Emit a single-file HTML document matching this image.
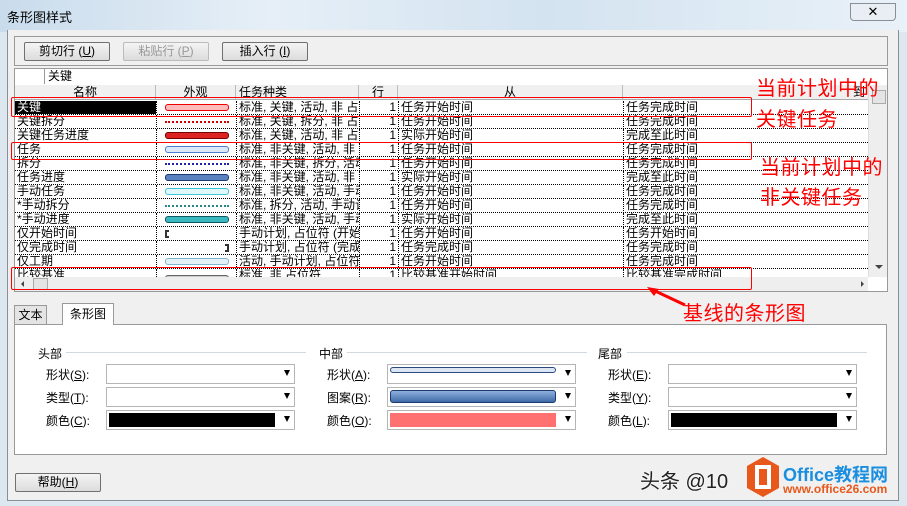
<!DOCTYPE html>
<html><head><meta charset="utf-8"><style>
*{box-sizing:border-box;margin:0;padding:0}
body{width:907px;height:506px;overflow:hidden;background:#dde7f0;font-family:"Liberation Sans","Noto Sans CJK SC",sans-serif;font-size:12px;color:#000;position:relative}
.abs{position:absolute}
.title{left:0;top:0;width:907px;height:32px;background:linear-gradient(90deg,#c9dcec,#e6eff7 30%,#d3e3f0 60%,#e9f1f8);}
.dlg{left:7px;top:30px;width:892px;height:471px;background:#f0f0f0;border:1px solid #8a8f96;border-top:none}
.btn{height:19px;border:1px solid #707070;border-radius:2px;background:linear-gradient(#f4f4f4,#dcdcdc);text-align:center;line-height:17px;font-size:12px}
.row{position:absolute;left:0;height:14px;width:853px;border-bottom:1px dotted #000;font-size:12px;line-height:13px;white-space:nowrap;overflow:hidden}
.c{position:absolute;top:0;height:14px;overflow:hidden}
.bar{position:absolute;left:8px;top:3px;width:64px;height:7px;border-radius:3px}
.red{color:#f00;font-size:20px;position:absolute;white-space:nowrap;letter-spacing:0.5px}
.box{position:absolute;width:189px;height:20px;background:#fff;border:1px solid #b5b5b5}
.box .ar{position:absolute;right:4px;top:5px;width:0;height:0;border-left:3px solid transparent;border-right:3px solid transparent;border-top:6px solid #000}
.lb{position:absolute;font-size:12px}
</style></head><body>
<div class="abs title"></div>
<div class="abs" style="left:7px;top:7px;font-size:13px">条形图样式</div>
<div class="abs" style="left:850px;top:3px;width:46px;height:18px;border:1px solid #8a8f96;border-radius:0 0 4px 4px;background:#e8eef4;text-align:center;font-size:13px;line-height:16px">✕</div>
<div class="abs dlg"></div>
<div class="abs" style="left:14px;top:36px;width:874px;height:30px;border:1px solid #999"></div>
<div class="abs btn" style="left:24px;top:42px;width:86px">剪切行 (<u>U</u>)</div>
<div class="abs btn" style="left:123px;top:42px;width:86px;color:#999;border-color:#bbb">粘贴行 (<u>P</u>)</div>
<div class="abs btn" style="left:222px;top:42px;width:86px">插入行 (<u>I</u>)</div>
<div class="abs" style="left:14px;top:68px;width:874px;height:224px;background:#fff;border:1px solid #999"></div>
<div class="abs" style="left:44px;top:68px;height:16px;border-left:1px solid #999;padding-left:3px;line-height:16px">关键</div>
<div class="abs" style="left:15px;top:85px;width:853px;height:15px;background:#f0f0f0;border-bottom:1px solid #aaa;line-height:14px">
<div class="c" style="left:0;width:141px;text-align:center;border-right:1px solid #bbb">名称</div>
<div class="c" style="left:141px;width:80px;text-align:center;border-right:1px solid #bbb">外观</div>
<div class="c" style="left:221px;width:123px;padding-left:3px;border-right:1px solid #bbb">任务种类</div>
<div class="c" style="left:344px;width:39px;text-align:center;border-right:1px solid #bbb">行</div>
<div class="c" style="left:383px;width:225px;text-align:center;border-right:1px solid #bbb">从</div>
<div class="c" style="left:608px;width:245px;text-align:right;padding-right:3px">到</div>
</div>
<div class="abs" style="left:15px;top:101px;width:853px;height:176px;overflow:hidden">
<div class="row" style="top:0"><div class="c" style="left:0;width:141px;background:#000;color:#fff;padding-left:2px">关键</div><div class="c" style="left:141px;width:80px;border-left:1px dotted #000"><div class="bar" style="background:#fbb;border:1px solid #e00"></div></div><div class="c" style="left:221px;width:123px;border-left:1px dotted #000;padding-left:2px">标准, 关键, 活动, 非 占</div><div class="c" style="left:344px;width:39px;border-left:1px dotted #000;text-align:right;padding-right:2px">1</div><div class="c" style="left:383px;width:225px;border-left:1px dotted #000;padding-left:2px">任务开始时间</div><div class="c" style="left:608px;width:245px;border-left:1px dotted #000;padding-left:2px">任务完成时间</div></div>
<div class="row" style="top:14px"><div class="c" style="left:0;width:141px;padding-left:2px">关键拆分</div><div class="c" style="left:141px;width:80px;border-left:1px dotted #000"><div class="bar" style="top:6px;height:2px;border-top:2px dotted #c00;border-radius:0"></div></div><div class="c" style="left:221px;width:123px;border-left:1px dotted #000;padding-left:2px">标准, 关键, 拆分, 非 占</div><div class="c" style="left:344px;width:39px;border-left:1px dotted #000;text-align:right;padding-right:2px">1</div><div class="c" style="left:383px;width:225px;border-left:1px dotted #000;padding-left:2px">任务开始时间</div><div class="c" style="left:608px;width:245px;border-left:1px dotted #000;padding-left:2px">任务完成时间</div></div>
<div class="row" style="top:28px"><div class="c" style="left:0;width:141px;padding-left:2px">关键任务进度</div><div class="c" style="left:141px;width:80px;border-left:1px dotted #000"><div class="bar" style="background:#d22;border:1px solid #700"></div></div><div class="c" style="left:221px;width:123px;border-left:1px dotted #000;padding-left:2px">标准, 关键, 活动, 非 占</div><div class="c" style="left:344px;width:39px;border-left:1px dotted #000;text-align:right;padding-right:2px">1</div><div class="c" style="left:383px;width:225px;border-left:1px dotted #000;padding-left:2px">实际开始时间</div><div class="c" style="left:608px;width:245px;border-left:1px dotted #000;padding-left:2px">完成至此时间</div></div>
<div class="row" style="top:42px"><div class="c" style="left:0;width:141px;padding-left:2px">任务</div><div class="c" style="left:141px;width:80px;border-left:1px dotted #000"><div class="bar" style="background:#dde8f8;border:1px solid #4a7fd0"></div></div><div class="c" style="left:221px;width:123px;border-left:1px dotted #000;padding-left:2px">标准, 非关键, 活动, 非</div><div class="c" style="left:344px;width:39px;border-left:1px dotted #000;text-align:right;padding-right:2px">1</div><div class="c" style="left:383px;width:225px;border-left:1px dotted #000;padding-left:2px">任务开始时间</div><div class="c" style="left:608px;width:245px;border-left:1px dotted #000;padding-left:2px">任务完成时间</div></div>
<div class="row" style="top:56px"><div class="c" style="left:0;width:141px;padding-left:2px">拆分</div><div class="c" style="left:141px;width:80px;border-left:1px dotted #000"><div class="bar" style="top:6px;height:2px;border-top:2px dotted #22a;border-radius:0"></div></div><div class="c" style="left:221px;width:123px;border-left:1px dotted #000;padding-left:2px">标准, 非关键, 拆分, 活动</div><div class="c" style="left:344px;width:39px;border-left:1px dotted #000;text-align:right;padding-right:2px">1</div><div class="c" style="left:383px;width:225px;border-left:1px dotted #000;padding-left:2px">任务开始时间</div><div class="c" style="left:608px;width:245px;border-left:1px dotted #000;padding-left:2px">任务完成时间</div></div>
<div class="row" style="top:70px"><div class="c" style="left:0;width:141px;padding-left:2px">任务进度</div><div class="c" style="left:141px;width:80px;border-left:1px dotted #000"><div class="bar" style="background:#5a82c0;border:1px solid #1c3a70"></div></div><div class="c" style="left:221px;width:123px;border-left:1px dotted #000;padding-left:2px">标准, 非关键, 活动, 非</div><div class="c" style="left:344px;width:39px;border-left:1px dotted #000;text-align:right;padding-right:2px">1</div><div class="c" style="left:383px;width:225px;border-left:1px dotted #000;padding-left:2px">实际开始时间</div><div class="c" style="left:608px;width:245px;border-left:1px dotted #000;padding-left:2px">完成至此时间</div></div>
<div class="row" style="top:84px"><div class="c" style="left:0;width:141px;padding-left:2px">手动任务</div><div class="c" style="left:141px;width:80px;border-left:1px dotted #000"><div class="bar" style="background:#e0f8fa;border:1px solid #3cc8d8"></div></div><div class="c" style="left:221px;width:123px;border-left:1px dotted #000;padding-left:2px">标准, 非关键, 活动, 手动</div><div class="c" style="left:344px;width:39px;border-left:1px dotted #000;text-align:right;padding-right:2px">1</div><div class="c" style="left:383px;width:225px;border-left:1px dotted #000;padding-left:2px">任务开始时间</div><div class="c" style="left:608px;width:245px;border-left:1px dotted #000;padding-left:2px">任务完成时间</div></div>
<div class="row" style="top:98px"><div class="c" style="left:0;width:141px;padding-left:2px">*手动拆分</div><div class="c" style="left:141px;width:80px;border-left:1px dotted #000"><div class="bar" style="top:6px;height:2px;border-top:2px dotted #288;border-radius:0"></div></div><div class="c" style="left:221px;width:123px;border-left:1px dotted #000;padding-left:2px">标准, 拆分, 活动, 手动计</div><div class="c" style="left:344px;width:39px;border-left:1px dotted #000;text-align:right;padding-right:2px">1</div><div class="c" style="left:383px;width:225px;border-left:1px dotted #000;padding-left:2px">任务开始时间</div><div class="c" style="left:608px;width:245px;border-left:1px dotted #000;padding-left:2px">任务完成时间</div></div>
<div class="row" style="top:112px"><div class="c" style="left:0;width:141px;padding-left:2px">*手动进度</div><div class="c" style="left:141px;width:80px;border-left:1px dotted #000"><div class="bar" style="background:#3ab8c0;border:1px solid #0c5a60"></div></div><div class="c" style="left:221px;width:123px;border-left:1px dotted #000;padding-left:2px">标准, 非关键, 活动, 手动</div><div class="c" style="left:344px;width:39px;border-left:1px dotted #000;text-align:right;padding-right:2px">1</div><div class="c" style="left:383px;width:225px;border-left:1px dotted #000;padding-left:2px">实际开始时间</div><div class="c" style="left:608px;width:245px;border-left:1px dotted #000;padding-left:2px">完成至此时间</div></div>
<div class="row" style="top:126px"><div class="c" style="left:0;width:141px;padding-left:2px">仅开始时间</div><div class="c" style="left:141px;width:80px;border-left:1px dotted #000"><div style="position:absolute;left:8px;top:3px;width:4px;height:8px;border:2px solid #333;border-right:none"></div></div><div class="c" style="left:221px;width:123px;border-left:1px dotted #000;padding-left:2px">手动计划, 占位符 (开始</div><div class="c" style="left:344px;width:39px;border-left:1px dotted #000;text-align:right;padding-right:2px">1</div><div class="c" style="left:383px;width:225px;border-left:1px dotted #000;padding-left:2px">任务开始时间</div><div class="c" style="left:608px;width:245px;border-left:1px dotted #000;padding-left:2px">任务开始时间</div></div>
<div class="row" style="top:140px"><div class="c" style="left:0;width:141px;padding-left:2px">仅完成时间</div><div class="c" style="left:141px;width:80px;border-left:1px dotted #000"><div style="position:absolute;left:68px;top:3px;width:4px;height:8px;border:2px solid #333;border-left:none"></div></div><div class="c" style="left:221px;width:123px;border-left:1px dotted #000;padding-left:2px">手动计划, 占位符 (完成</div><div class="c" style="left:344px;width:39px;border-left:1px dotted #000;text-align:right;padding-right:2px">1</div><div class="c" style="left:383px;width:225px;border-left:1px dotted #000;padding-left:2px">任务完成时间</div><div class="c" style="left:608px;width:245px;border-left:1px dotted #000;padding-left:2px">任务完成时间</div></div>
<div class="row" style="top:154px"><div class="c" style="left:0;width:141px;padding-left:2px">仅工期</div><div class="c" style="left:141px;width:80px;border-left:1px dotted #000"><div class="bar" style="background:#e4f2f8;border:1px solid #7ab8d0"></div></div><div class="c" style="left:221px;width:123px;border-left:1px dotted #000;padding-left:2px">活动, 手动计划, 占位符</div><div class="c" style="left:344px;width:39px;border-left:1px dotted #000;text-align:right;padding-right:2px">1</div><div class="c" style="left:383px;width:225px;border-left:1px dotted #000;padding-left:2px">任务开始时间</div><div class="c" style="left:608px;width:245px;border-left:1px dotted #000;padding-left:2px">任务完成时间</div></div>
<div class="row" style="top:168px;border:none"><div class="c" style="left:0;width:141px;padding-left:2px">比较基准</div><div class="c" style="left:141px;width:80px;border-left:1px dotted #000"><div class="bar" style="top:6px;background:#ccc;border:1px solid #666"></div></div><div class="c" style="left:221px;width:123px;border-left:1px dotted #000;padding-left:2px">标准, 非 占位符</div><div class="c" style="left:344px;width:39px;border-left:1px dotted #000;text-align:right;padding-right:2px">1</div><div class="c" style="left:383px;width:225px;border-left:1px dotted #000;padding-left:2px">比较基准开始时间</div><div class="c" style="left:608px;width:245px;border-left:1px dotted #000;padding-left:2px">比较基准完成时间</div></div>
</div>
<div class="abs" style="left:868px;top:85px;width:19px;height:192px;background:#eee;border-left:1px solid #ddd"><div style="position:absolute;left:3px;top:5px;width:14px;height:14px;background:#e4e4e4;border:1px solid #aaa"></div><div style="position:absolute;left:6px;top:180px;border-left:4px solid transparent;border-right:4px solid transparent;border-top:4px solid #444"></div></div>
<div class="abs" style="left:15px;top:277px;width:853px;height:14px;background:#eee"><div style="position:absolute;left:18px;top:1px;width:15px;height:12px;background:#e4e4e4;border:1px solid #aaa"></div><div style="position:absolute;left:6px;top:4px;border-top:3px solid transparent;border-bottom:3px solid transparent;border-right:3px solid #444"></div><div style="position:absolute;left:846px;top:4px;border-top:3px solid transparent;border-bottom:3px solid transparent;border-left:3px solid #444"></div></div>
<div class="abs" style="left:11px;top:97px;width:741px;height:20px;border:1px solid #f00;border-radius:2px"></div>
<div class="abs" style="left:11px;top:142px;width:741px;height:18px;border:1px solid #f00;border-radius:2px"></div>
<div class="abs" style="left:11px;top:267px;width:741px;height:23px;border:1px solid #f00;border-radius:2px"></div>
<div class="red" style="left:756px;top:72px">当前计划中的</div>
<div class="red" style="left:756px;top:103px">关键任务</div>
<div class="red" style="left:760px;top:151px">当前计划中的</div>
<div class="red" style="left:760px;top:181px">非关键任务</div>
<div class="red" style="left:683px;top:297px">基线的条形图</div>
<svg class="abs" style="left:645px;top:285px" width="45" height="25"><path d="M40 20 L8 5" stroke="#f00" stroke-width="3"/><path d="M2 2 L14 4 L9 11 Z" fill="#f00"/></svg>
<div class="abs" style="left:14px;top:305px;width:33px;height:19px;border:1px solid #999;border-bottom:none;background:#e4e4e4;text-align:center;line-height:19px">文本</div>
<div class="abs" style="left:62px;top:303px;width:52px;height:22px;border:1px solid #999;border-bottom:none;background:#fff;text-align:center;line-height:21px;z-index:2">条形图</div>
<div class="abs" style="left:14px;top:324px;width:873px;height:131px;background:#fff;border:1px solid #999"></div>
<div class="lb" style="left:38px;top:345px">头部</div><div class="abs" style="left:66px;top:352px;width:240px;height:1px;background:#d0d8e0"></div>
<div class="lb" style="left:319px;top:345px">中部</div><div class="abs" style="left:347px;top:352px;width:240px;height:1px;background:#d0d8e0"></div>
<div class="lb" style="left:598px;top:345px">尾部</div><div class="abs" style="left:627px;top:352px;width:240px;height:1px;background:#d0d8e0"></div>
<div class="lb" style="left:46px;top:366px">形状(<u>S</u>):</div><div class="lb" style="left:46px;top:389px">类型(<u>T</u>):</div><div class="lb" style="left:46px;top:412px">颜色(<u>C</u>):</div>
<div class="lb" style="left:327px;top:366px">形状(<u>A</u>):</div><div class="lb" style="left:327px;top:389px">图案(<u>R</u>):</div><div class="lb" style="left:327px;top:412px">颜色(<u>O</u>):</div>
<div class="lb" style="left:608px;top:366px">形状(<u>E</u>):</div><div class="lb" style="left:608px;top:389px">类型(<u>Y</u>):</div><div class="lb" style="left:608px;top:412px">颜色(<u>L</u>):</div>
<div class="box" style="left:106px;top:364px"><div class="ar"></div></div>
<div class="box" style="left:106px;top:387px"><div class="ar"></div></div>
<div class="box" style="left:106px;top:410px"><div style="position:absolute;left:2px;top:2px;width:166px;height:14px;background:#000"></div><div class="ar"></div></div>
<div class="box" style="left:387px;top:364px"><div style="position:absolute;left:2px;top:2px;width:166px;height:6px;background:#dce6f2;border:1px solid #2a4a80;border-radius:3px"></div><div class="ar"></div></div>
<div class="box" style="left:387px;top:387px"><div style="position:absolute;left:2px;top:2px;width:166px;height:13px;background:linear-gradient(#8fb0de,#3f6aa8);border:1px solid #1c3a70;border-radius:3px"></div><div class="ar"></div></div>
<div class="box" style="left:387px;top:410px"><div style="position:absolute;left:2px;top:2px;width:166px;height:14px;background:#ff7070"></div><div class="ar"></div></div>
<div class="box" style="left:668px;top:364px"><div class="ar"></div></div>
<div class="box" style="left:668px;top:387px"><div class="ar"></div></div>
<div class="box" style="left:668px;top:410px"><div style="position:absolute;left:2px;top:2px;width:166px;height:14px;background:#000"></div><div class="ar"></div></div>
<div class="abs btn" style="left:15px;top:473px;width:86px">帮助(<u>H</u>)</div>
<div class="abs" style="left:640px;top:465px;font-size:20px;color:#222;text-shadow:0 0 2px #fff">头条 @10</div>
<svg class="abs" style="left:745px;top:456px" width="36" height="42"><path d="M18 1 L34 10 L34 32 L18 41 L2 32 L2 10 Z" fill="#e8581b"/><rect x="12" y="11" width="12" height="20" fill="none" stroke="#fff" stroke-width="4"/></svg>
<div class="abs" style="left:783px;top:461px;font-size:18px;font-weight:bold;color:#1a8fe0">Office教程网</div>
<div class="abs" style="left:783px;top:482px;font-size:12px;font-weight:bold;color:#e8581b">www.office26.com</div>
</body></html>
